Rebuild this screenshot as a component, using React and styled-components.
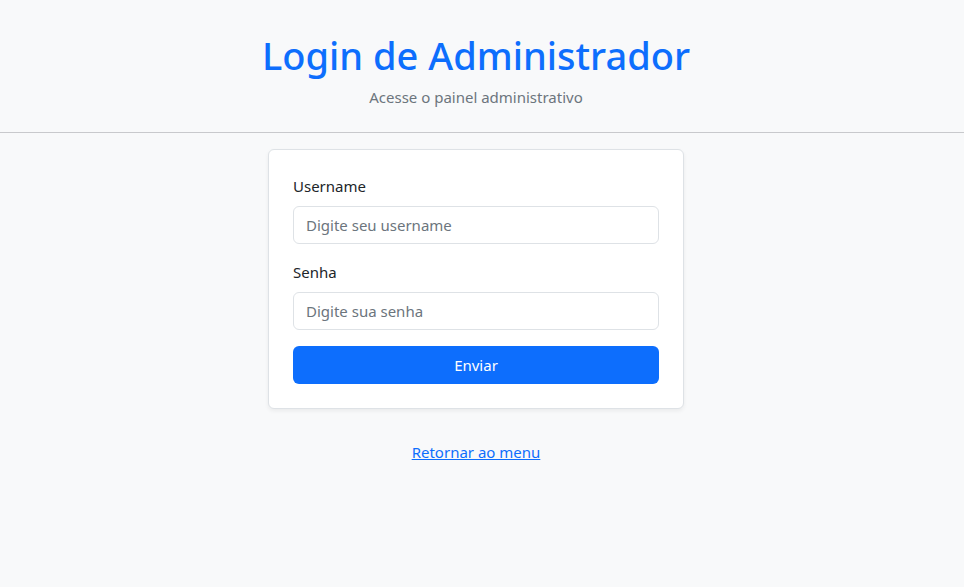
import React from 'react'
import styled, { createGlobalStyle } from 'styled-components'

const GlobalStyle = createGlobalStyle`
  html, body {
    margin: 0;
    padding: 0;
    background: #f8f9fa;
    font-family: 'Noto Sans', 'Open Sans', sans-serif;
    color: #212529;
  }
  * { box-sizing: border-box; }
`

const Page = styled.div`
  min-height: 100vh;
  background: #f8f9fa;
`

/* content is centred on a slightly narrower column than the window */
const Column = styled.div`
  padding-right: 12px;
`

const Header = styled(Column).attrs({ as: 'header' })`
  padding-top: 31px;
  text-align: center;
`

const Title = styled.h1`
  margin: 0 0 6px;
  font-size: 38px;
  line-height: 48px;
  font-weight: 500;
  color: #0d6efd;
`

const Subtitle = styled.p`
  margin: 0;
  font-size: 15px;
  line-height: 24px;
  color: #6c757d;
`

const Rule = styled.hr`
  margin: 23px 0 16px;
  border: 0;
  border-top: 1px solid #c8c9cc;
`

const Card = styled.form`
  width: 416px;
  margin: 0 auto;
  padding: 24px;
  background: #fff;
  border: 1px solid #dee2e6;
  border-radius: 6px;
  box-shadow: 0 2px 4px rgba(0, 0, 0, 0.06);
`

const Field = styled.div`
  margin-bottom: 16px;
`

const Label = styled.label`
  display: block;
  margin-bottom: 8px;
  font-size: 15px;
  line-height: 24px;
  color: #212529;
`

const Input = styled.input`
  display: block;
  width: 100%;
  height: 38px;
  padding: 6px 12px;
  font: inherit;
  font-size: 15px;
  color: #212529;
  background: #fff;
  border: 1px solid #dee2e6;
  border-radius: 6px;
  outline: none;

  &::placeholder {
    color: #6c757d;
  }
`

const Button = styled.button`
  display: block;
  width: 100%;
  height: 38px;
  font: inherit;
  font-size: 15px;
  color: #fff;
  background: #0d6efd;
  border: 0;
  border-radius: 6px;
  cursor: pointer;
`

const Footer = styled(Column)`
  margin-top: 31px;
  text-align: center;
  font-size: 15px;
  line-height: 24px;
`

const Link = styled.a`
  color: #0d6efd;
  text-decoration: underline;
`

export default function App () {
  return (
    <Page>
      <GlobalStyle />
      <Header>
        <Title>Login de Administrador</Title>
        <Subtitle>Acesse o painel administrativo</Subtitle>
      </Header>
      <Rule />
      <Column>
        <Card onSubmit={(e) => e.preventDefault()}>
          <Field>
            <Label htmlFor='username'>Username</Label>
            <Input id='username' type='text' placeholder='Digite seu username' />
          </Field>
          <Field>
            <Label htmlFor='senha'>Senha</Label>
            <Input id='senha' type='password' placeholder='Digite sua senha' />
          </Field>
          <Button type='submit'>Enviar</Button>
        </Card>
      </Column>
      <Footer>
        <Link href='#'>Retornar ao menu</Link>
      </Footer>
    </Page>
  )
}
